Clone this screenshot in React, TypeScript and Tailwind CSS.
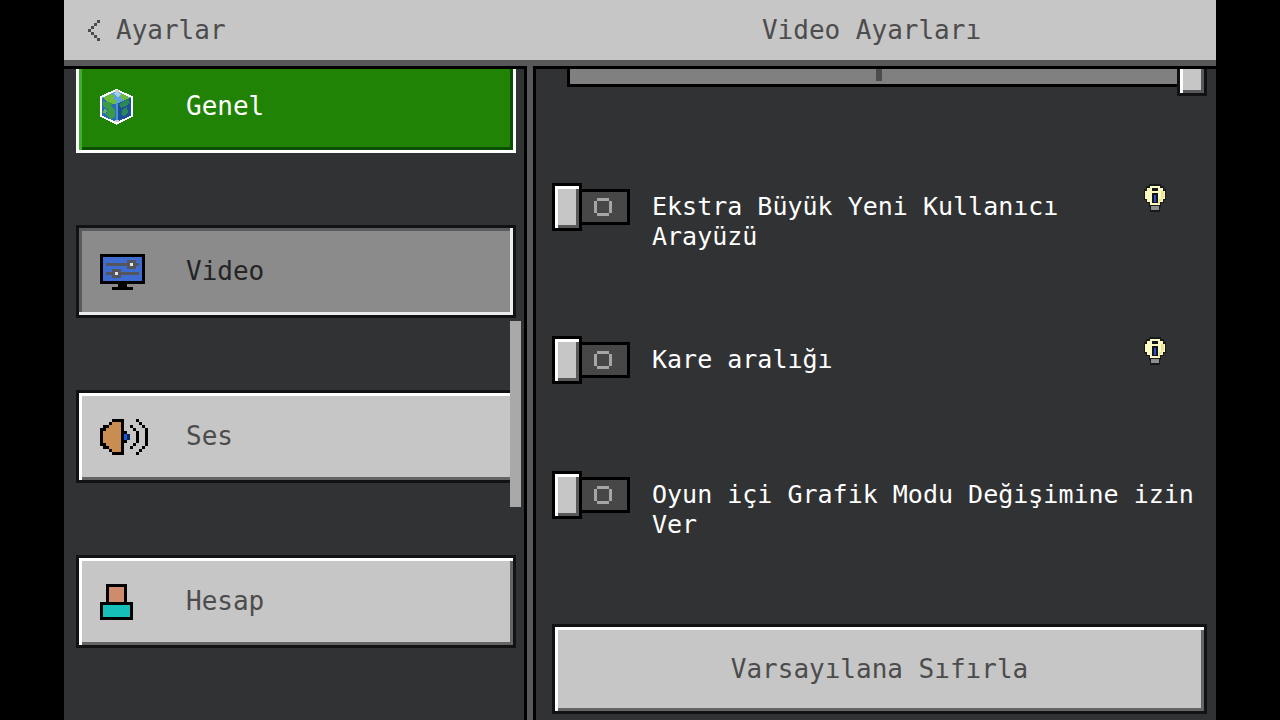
import { useState } from "react";

const palette: Record<string, string> = {
  K: "#000000",
  b: "#3f6cd0",
  g: "#55565c",
  w: "#e6e6e6",
  o: "#c98d52",
  B: "#1457d8",
  n: "#0c2450",
  s: "#cf8c6c",
  t: "#16bfb9",
  a: "#a6a6a6",
  c: "#4c4c4c",
};

const monitor = [
  "KKKKKKKKKKKKKKK",
  "KbbbbbbbbbbbbbK",
  "KbbbbbbbbgggbbK",
  "KbggggggggwggbK",
  "KbbbbbbbbgggbbK",
  "KbbbgggbbbbbbbK",
  "KbgggwgggggggbK",
  "KbbbgggbbbbbbbK",
  "KbbbbbbbbbbbbbK",
  "KKKKKKKKKKKKKKK",
  "......KKK......",
  "....KKKKKKK....",
];

const speaker = [
  "....KKKK....K...",
  "...KoooK.....K..",
  ".KKooooK..K...K.",
  "KKoooooK...K...K",
  "KooooooKK...K..K",
  "KooooooKBn..K..K",
  "KooooooKBn..K..K",
  "KooooooKK...K..K",
  "KKoooooK...K...K",
  ".KKooooK..K...K.",
  "...KoooK.....K..",
  "....KKKK....K...",
];

const person = [
  "..KKKKKKK..",
  "..KsssssK..",
  "..KsssssK..",
  "..KsssssK..",
  "..KsssssK..",
  "..KsssssK..",
  "KKKKKKKKKKK",
  "KtttttttttK",
  "KtttttttttK",
  "KtttttttttK",
  "KtttttttttK",
  "KKKKKKKKKKK",
];

const circle = [".aaaa.", "a....a", "a....a", "a....a", "a....a", ".aaaa."];

const chevron = ["...c", "..c.", ".c..", "c...", ".c..", "..c.", "...c"];

const PixelIcon = ({ rows, size = 3 }: { rows: string[]; size?: number }) => (
  <svg
    width={rows[0].length * size}
    height={rows.length * size}
    viewBox={`0 0 ${rows[0].length} ${rows.length}`}
    shapeRendering="crispEdges"
    aria-hidden="true"
    className="shrink-0"
  >
    {rows.flatMap((row, y) =>
      [...row].map((c, x) =>
        c === "." ? null : (
          <rect key={`${x}-${y}`} x={x} y={y} width="1" height="1" fill={palette[c]} />
        ),
      ),
    )}
  </svg>
);

const Globe = () => (
  <svg width="34" height="36" viewBox="0 0 34 36" shapeRendering="crispEdges" aria-hidden="true">
    <path d="M16.5 1 32 8v19L16.5 34.500 1 27V8z" fill="#2a6cb4" />
    <path d="M16.500 15 32 8v19l-15.500 7.500z" fill="#1c4f98" />
    <path d="M16.500 1 32 8l-15.500 7L1 8z" fill="#5ba3d8" />
    <path d="M3 9l7-4 5 2-2 3 4 2-2 3-6-1zM20 5l5 1 5 3-6 2-3-2z" fill="#6cbc38" />
    <path d="M3 12l9 2-1 5-4 1-4-3zM11 17l4 4v7l-4 2-5-4 2-5z" fill="#3a9a46" />
    <path d="M4 20l3 1-1 4-3-1z" fill="#63b45a" />
    <path d="M19 15l9-5 2 4-4 3-5 2zM23 20l4-2 1 5-4 4-3-2z" fill="#2a8a55" />
    <path d="M16 14h2v19h-2z" fill="#4b94d4" />
    <path d="M14 4l3-2 4 3-3 4z" fill="#a5cdea" />
    <path
      d="M16.500 1 32 8v19L16.500 34.500 1 27V8z"
      fill="none"
      stroke="#ffffff"
      strokeWidth="2"
    />
    <path d="M15 1h4v2h-4zM15 31h4v2h-4z" fill="#cfcbd6" />
  </svg>
);

const Bulb = () => (
  <svg width="24" height="30" viewBox="0 0 24 30" shapeRendering="crispEdges" aria-hidden="true">
    <path
      d="M6 1h12v2h3v3h2v11h-2v3h-3v4h-1v5H7v-5H6v-4H3v-3H1V6h2V3h3z"
      fill="#18191b"
    />
    <path d="M7 3h10v2h3v3h2v8h-2v3h-3v3H7v-3H4v-3H2V8h2V5h3z" fill="#fbfbc2" />
    <path d="M18 8h3v7h-2v3h-2v3h-3v-2h2v-3h2z" fill="#e6e59a" />
    <path d="M9 5h6v3H9zM9 10h6v10H9z" fill="#14161c" />
    <path d="M11 12h2v7h-2z" fill="#2d55c8" />
    <path d="M8 23h8v4H8z" fill="#8e8e8e" />
  </svg>
);

const raised =
  "border-[3px] border-[#111213] bg-[#c6c6c6] text-[#4c4c4c] shadow-[inset_3px_3px_0_#ffffff,inset_-3px_-3px_0_#656465]";
const pressed =
  "border-[3px] border-[#111213] bg-[#8b8b8b] text-[#242424] shadow-[inset_-3px_-3px_0_#ececec,inset_3px_3px_0_#5a5b5c]";
const focused =
  "border-[3px] border-white bg-[#218306] text-white shadow-[inset_3px_3px_0_#3fae2a,inset_-3px_-3px_0_#0a4f05]";

const tabs = [
  { name: "Genel", icon: <Globe />, style: focused },
  { name: "Video", icon: <PixelIcon rows={monitor} />, style: pressed },
  { name: "Ses", icon: <PixelIcon rows={speaker} />, style: raised },
  { name: "Hesap", icon: <PixelIcon rows={person} />, style: raised },
];

const options = [
  { name: "Ekstra Büyük Yeni Kullanıcı Arayüzü", hint: true },
  { name: "Kare aralığı", hint: true },
  { name: "Oyun içi Grafik Modu Değişimine izin Ver", hint: false },
];

const Toggle = ({ name, hint }: { name: string; hint: boolean }) => {
  const [on, setOn] = useState(false);
  return (
    <div className="flex items-start">
      <label className="flex min-w-0 flex-1 items-start gap-[22px]">
        <span className="relative flex h-12 w-[78px] shrink-0 items-center">
          <input
            type="checkbox"
            checked={on}
            onChange={(e) => setOn(e.target.checked)}
            className="peer absolute inset-0 z-10 cursor-pointer appearance-none"
          />
          <span className="h-12 w-[30px] border-[3px] border-black bg-[#c6c6c6] shadow-[inset_3px_3px_0_#ffffff,inset_-3px_-3px_0_#58585a] peer-checked:order-2" />
          <span className="flex h-9 w-12 items-center justify-center border-y-[3px] border-r-[3px] border-black bg-[#474747] pr-[3px] peer-checked:bg-[#218306]">
            <PixelIcon rows={circle} />
          </span>
        </span>
        <span className="-mb-[3px] pt-[9px] text-[25px] leading-[30px] text-white">
          {name}
        </span>
      </label>
      {hint && (
        <button type="button" aria-label="Bilgi" className="mr-10">
          <Bulb />
        </button>
      )}
    </div>
  );
};

const App = () => {
  const [distance, setDistance] = useState(100);
  return (
    <div className="h-screen bg-black font-['DejaVu_Sans_Mono',monospace] text-[26px]">
      <div className="mx-16 flex h-full flex-col bg-[#313233]">
        <header className="flex h-[66px] shrink-0 items-center border-b-[6px] border-[#58585a] bg-[#c6c6c6] text-[#4c4c4c]">
          <button type="button" className="flex w-[463px] items-center gap-4 pl-6">
            <PixelIcon rows={chevron} />
            Ayarlar
          </button>
          <h1 className="flex-1 text-center">Video Ayarları</h1>
        </header>
        <div className="flex min-h-0 flex-1">
          <nav className="relative w-[463px] shrink-0 overflow-hidden border-t-[3px] border-r-[3px] border-black pr-2 pl-3">
            <div className="-mt-[9px] flex flex-col gap-[72px]">
              {tabs.map((tab) => (
                <button
                  key={tab.name}
                  type="button"
                  className={`flex h-[93px] items-center pl-[21px] ${tab.style}`}
                >
                  <span className="w-[86px]">{tab.icon}</span>
                  {tab.name}
                </button>
              ))}
            </div>
            <div className="absolute top-[252px] right-[3px] h-[186px] w-[11px] bg-[#a9a9a9]" />
          </nav>
          <div className="w-[6px] shrink-0 bg-[#58585a]" />
          <main className="flex-1 overflow-hidden border-t-[3px] border-l-[3px] border-black pr-[9px] pl-4">
            <div className="relative -mt-[21px] ml-[15px] flex h-12 items-center">
              <div className="flex h-[30px] w-full justify-center border-[3px] border-black bg-[#808080] pr-4">
                <div className="my-[3px] w-[6px] bg-[#4c4c4c]" />
              </div>
              <input
                type="range"
                aria-label="Görüş Alanı"
                value={distance}
                onChange={(e) => setDistance(Number(e.target.value))}
                className="absolute inset-0 m-0 h-12 w-full cursor-pointer appearance-none bg-transparent [&::-webkit-slider-thumb]:h-12 [&::-webkit-slider-thumb]:w-[30px] [&::-webkit-slider-thumb]:appearance-none [&::-webkit-slider-thumb]:border-[3px] [&::-webkit-slider-thumb]:border-[#111213] [&::-webkit-slider-thumb]:bg-[#c6c6c6] [&::-webkit-slider-thumb]:shadow-[inset_3px_3px_0_#ffffff,inset_-3px_-3px_0_#58585a]"
              />
            </div>
            <div className="mt-[87px] flex flex-col gap-[87px]">
              {options.map((option) => (
                <Toggle key={option.name} {...option} />
              ))}
              <button type="button" className={`h-[90px] ${raised}`}>
                Varsayılana Sıfırla
              </button>
            </div>
          </main>
        </div>
      </div>
    </div>
  );
};
export default App;
